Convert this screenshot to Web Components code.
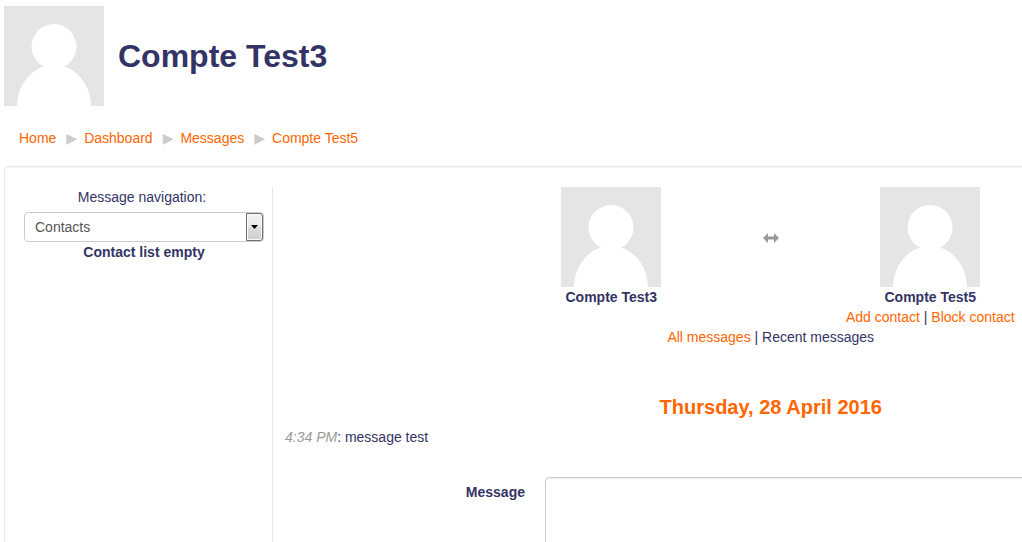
<!DOCTYPE html>
<html lang="en">
<head>
<meta charset="utf-8">
<title>Compte Test3: Messages</title>
<style>
  html {
    overflow-x: hidden;
    scrollbar-width: none;
  }

  body {
    margin: 0;
    padding: 6px 0 0 4px;
    background: #fff;
    color: #336;
    font: 14px/20px "Liberation Sans", Arial, sans-serif;
    --link: #f60;
    --muted: #999;
  }
</style>
</head>
<body>
  <page-header name="Compte Test3"></page-header>
  <bread-crumbs>
    <a href="#home">Home</a>
    <a href="#dashboard">Dashboard</a>
    <a href="#messages">Messages</a>
    <a href="#user">Compte Test5</a>
  </bread-crumbs>
  <message-panel>
    <contact-nav slot="nav"></contact-nav>
    <message-users>
      <user-card name="Compte Test3"></user-card>
      <user-card name="Compte Test5" contact></user-card>
    </message-users>
    <message-history date="Thursday, 28 April 2016">
      <message-item time="4:34 PM">message test</message-item>
    </message-history>
    <message-form></message-form>
  </message-panel>

<script>
// Default picture for users without an uploaded one
class UserAvatar extends HTMLElement {
  constructor() {
    super();
    this.attachShadow({ mode: "open" });
    this.shadowRoot.innerHTML = `
      <style>
        :host { display: block; width: 100px; height: 100px; }
        svg { display: block; width: 100%; height: 100%; }
      </style>
      <svg viewBox="0 0 100 100" aria-hidden="true">
        <rect width="100" height="100" fill="#e5e5e5"/>
        <circle cx="50" cy="40.500" r="22.500" fill="#fff"/>
        <ellipse cx="50" cy="100" rx="37" ry="41" fill="#fff"/>
      </svg>
    `;
  }
}
customElements.define("user-avatar", UserAvatar);

class PageHeader extends HTMLElement {
  constructor() {
    super();
    this.attachShadow({ mode: "open" });
  }

  connectedCallback() {
    this.shadowRoot.innerHTML = `
      <style>
        :host { display: block; }
        header { display: flex; align-items: center; gap: 14px; }
        h1 { margin: 0; font-size: 32px; line-height: 40px; }
      </style>
      <header>
        <user-avatar></user-avatar>
        <h1>${this.getAttribute("name")}</h1>
      </header>
    `;
  }
}
customElements.define("page-header", PageHeader);

class BreadCrumbs extends HTMLElement {
  constructor() {
    super();
    this.attachShadow({ mode: "open" });
  }

  connectedCallback() {
    const links = [...this.querySelectorAll("a")];
    // Give every link its own slot so that a separator can stand between them
    links.forEach((link, i) => (link.slot = `crumb-${i}`));
    this.shadowRoot.innerHTML = `
      <style>
        :host { display: block; padding: 22px 15px 18px; }
        ul { display: flex; margin: 0; padding: 0; list-style: none; }
        li { display: flex; }
        .sep { margin: 0 7px 0 10px; color: #ccc; font-family: "DejaVu Sans", sans-serif; font-size: 14px; }
        ::slotted(a) { color: var(--link); text-decoration: none; }
      </style>
      <nav aria-label="Breadcrumb">
        <ul>
          ${links.map((link, i) => `<li>${i ? '<span class="sep">▶</span>' : ""}<slot name="${link.slot}"></slot></li>`).join("")}
        </ul>
      </nav>
    `;
  }
}
customElements.define("bread-crumbs", BreadCrumbs);

// Two columns: navigation on the left, conversation on the right
class MessagePanel extends HTMLElement {
  constructor() {
    super();
    this.attachShadow({ mode: "open" });
    this.shadowRoot.innerHTML = `
      <style>
        :host {
          display: grid;
          grid-template-columns: auto 1fr;
          box-sizing: border-box;
          width: 125%;
          padding: 20px 19px;
          border: 1px solid #e8e8e8;
          border-radius: 4px;
          box-shadow: inset 0 1px 1px rgba(0, 0, 0, 0.05);
        }
        aside { padding-right: 8px; border-right: 1px solid #e8e8e8; }
        main { padding-left: 12px; }
      </style>
      <aside><slot name="nav"></slot></aside>
      <main><slot></slot></main>
    `;
  }
}
customElements.define("message-panel", MessagePanel);

class ContactNav extends HTMLElement {
  constructor() {
    super();
    this.attachShadow({ mode: "open" });
    this.shadowRoot.innerHTML = `
      <style>
        :host { display: block; width: 240px; text-align: center; }
        label { display: block; padding-right: 4px; }
        .select { position: relative; margin-top: 5px; }
        select {
          display: block;
          appearance: none;
          box-sizing: border-box;
          width: 100%;
          height: 30px;
          padding: 0 28px 0 10px;
          border: 1px solid #ccc;
          border-radius: 4px;
          background: #fff;
          color: #555;
          font: inherit;
        }
        .arrow {
          position: absolute;
          top: 1px;
          right: 1px;
          bottom: 1px;
          display: flex;
          align-items: center;
          justify-content: center;
          box-sizing: border-box;
          width: 17px;
          border: 1px solid #707070;
          border-radius: 0 3px 3px 0;
          background: linear-gradient(#f2f2f2, #ebebeb 50%, #ddd 50%, #cfcfcf);
          box-shadow: inset 0 0 0 1px #fafafa;
          pointer-events: none;
        }
        p { margin: 0; font-weight: bold; }
      </style>
      <label for="view">Message navigation:</label>
      <div class="select">
        <select id="view">
          <option>Contacts</option>
          <option>Recent conversations</option>
        </select>
        <span class="arrow">
          <svg width="7" height="4" viewBox="0 0 7 4" aria-hidden="true"><path d="M0 0h7L3.500 4z"/></svg>
        </span>
      </div>
      <p>Contact list empty</p>
    `;
  }
}
customElements.define("contact-nav", ContactNav);

class UserCard extends HTMLElement {
  constructor() {
    super();
    this.attachShadow({ mode: "open" });
  }

  connectedCallback() {
    this.shadowRoot.innerHTML = `
      <style>
        :host { display: flex; flex-direction: column; align-items: center; width: 180px; }
        a { color: var(--link); text-decoration: none; }
      </style>
      <user-avatar></user-avatar>
      <strong>${this.getAttribute("name")}</strong>
      ${this.hasAttribute("contact") ? '<div><a href="#add">Add contact</a> | <a href="#block">Block contact</a></div>' : ""}
    `;
  }
}
customElements.define("user-card", UserCard);

class MessageUsers extends HTMLElement {
  constructor() {
    super();
    this.attachShadow({ mode: "open" });
  }

  connectedCallback() {
    const [from, to] = this.querySelectorAll("user-card");
    from.slot = "from";
    to.slot = "to";
    this.shadowRoot.innerHTML = `
      <style>
        :host { display: block; text-align: center; }
        .pair { display: flex; justify-content: center; }
        .between {
          display: flex;
          align-items: center;
          justify-content: center;
          width: 139px;
          height: 102px;
        }
        a { color: var(--link); text-decoration: none; }
      </style>
      <div class="pair">
        <slot name="from"></slot>
        <div class="between">
          <svg width="16" height="10" viewBox="0 0 16 10" aria-hidden="true">
            <path fill="#999" d="M0 5L5 0V3.500H11V0L16 5L11 10V6.500H5V10Z"/>
          </svg>
        </div>
        <slot name="to"></slot>
      </div>
      <div><a href="#all">All messages</a> | Recent messages</div>
    `;
  }
}
customElements.define("message-users", MessageUsers);

class MessageHistory extends HTMLElement {
  constructor() {
    super();
    this.attachShadow({ mode: "open" });
  }

  connectedCallback() {
    this.shadowRoot.innerHTML = `
      <style>
        :host { display: block; margin-top: 40px; }
        h4 {
          margin: 0;
          color: var(--link);
          font-size: 20px;
          line-height: 40px;
          text-align: center;
        }
      </style>
      <h4>${this.getAttribute("date")}</h4>
      <slot></slot>
    `;
  }
}
customElements.define("message-history", MessageHistory);

class MessageItem extends HTMLElement {
  constructor() {
    super();
    this.attachShadow({ mode: "open" });
  }

  connectedCallback() {
    this.shadowRoot.innerHTML = `
      <style>
        :host { display: block; }
        time { color: var(--muted); font-style: italic; }
      </style>
      <time>${this.getAttribute("time")}</time>: <slot></slot>
    `;
  }
}
customElements.define("message-item", MessageItem);

class MessageForm extends HTMLElement {
  constructor() {
    super();
    this.attachShadow({ mode: "open" });
    this.shadowRoot.innerHTML = `
      <style>
        :host { display: block; margin-top: 30px; }
        form { display: grid; grid-template-columns: 240px 1fr; gap: 20px; }
        label { padding-top: 5px; font-weight: bold; text-align: right; }
        textarea {
          box-sizing: border-box;
          width: 100%;
          padding: 4px 6px;
          border: 1px solid #ccc;
          border-radius: 4px;
          box-shadow: inset 0 1px 1px rgba(0, 0, 0, 0.08);
          color: #555;
          font: inherit;
          resize: vertical;
        }
      </style>
      <form>
        <label for="message">Message</label>
        <textarea id="message" rows="12"></textarea>
      </form>
    `;
  }
}
customElements.define("message-form", MessageForm);
</script>
</body>
</html>
